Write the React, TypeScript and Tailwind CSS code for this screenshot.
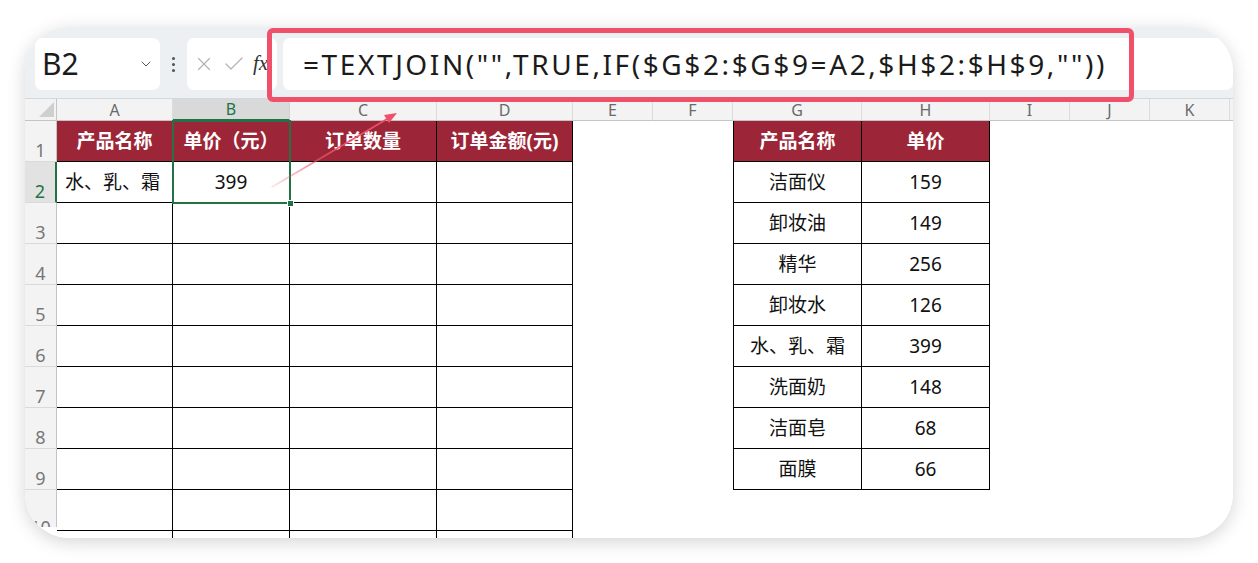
import { Check, ChevronDown, X } from "lucide-react";

// column widths in px: row header, A..K, and a sliver past K
const LETTERS = ["", "A", "B", "C", "D", "E", "F", "G", "H", "I", "J", "K", ""];

const ORDER_HEAD = ["产品名称", "单价（元）", "订单数量", "订单金额(元)"];

const PRICES: [string, string][] = [
  ["洁面仪", "159"],
  ["卸妆油", "149"],
  ["精华", "256"],
  ["卸妆水", "126"],
  ["水、乳、霜", "399"],
  ["洗面奶", "148"],
  ["洁面皂", "68"],
  ["面膜", "66"],
];

const FONT = "font-['Noto_Sans','Noto_Sans_CJK_SC',sans-serif]";

function ColumnHeader() {
  return (
    <>
      {LETTERS.map((l, i) => {
        if (i === 0) {
          return (
            <div key={i} className="relative h-[22px] bg-[#f3f3f3] border-r border-b border-[#c4c4c4]">
              <div className="absolute right-[2px] bottom-[3px] w-0 h-0 border-l-[15px] border-l-transparent border-b-[15px] border-b-[#cfcfcf]" />
            </div>
          );
        }
        const active = l === "B";
        return (
          <div
            key={i}
            className={
              active
                ? "h-[22px] flex items-center justify-center bg-[#d9d9d9] border-r border-[#d0d0d0] border-b-2 border-b-[#217346] text-[16px] text-[#217346]"
                : "h-[22px] flex items-center justify-center bg-[#f3f3f3] border-r border-[#dcdcdc] border-b border-b-[#c4c4c4] text-[16px] text-[#6a6a6a]"
            }
          >
            {l}
          </div>
        );
      })}
    </>
  );
}

function RowHeader({ n }: { n: number }) {
  if (n === 11) return <div className="h-[41px]" />;
  if (n === 10) {
    return (
      <div className="h-[41px]">
        <div className="h-[37px] overflow-hidden bg-[#f3f3f3] border-r border-[#c4c4c4] flex items-end justify-center">
          <span className="text-[18px] leading-[20px] text-[#777] translate-y-[10px]">10</span>
        </div>
      </div>
    );
  }
  const active = n === 2;
  return (
    <div
      className={
        active
          ? "h-[41px] flex items-end justify-center pb-[1px] bg-[#e2e2e2] border-r-2 border-r-[#217346] border-b border-b-[#dadada] text-[18px] leading-[20px] text-[#217346]"
          : "h-[41px] flex items-end justify-center pb-[1px] bg-[#f3f3f3] border-r border-r-[#c4c4c4] border-b border-b-[#dadada] text-[18px] leading-[20px] text-[#777]"
      }
    >
      {n}
    </div>
  );
}

function Cell({ r, c }: { r: number; c: number }) {
  const inOrder = c >= 1 && c <= 4;
  const inPrice = (c === 7 || c === 8) && r <= 9;

  if (inOrder) {
    if (r === 1) {
      return (
        <div className="h-[41px] flex items-center justify-center bg-[#9c2637] border-r border-b border-black text-[19px] font-bold text-white">
          {ORDER_HEAD[c - 1]}
        </div>
      );
    }
    let text = "";
    let align = "justify-center";
    if (r === 2 && c === 1) {
      text = "水、乳、霜";
      align = "justify-start pl-[8px]";
    }
    if (r === 2 && c === 2) text = "399";
    return (
      <div className={`h-[41px] flex items-center ${align} bg-white border-r border-b border-black text-[19px] text-[#111]`}>
        {text}
      </div>
    );
  }

  if (inPrice) {
    const side = c === 7 ? "border-l border-r" : "border-r";
    if (r === 1) {
      return (
        <div className={`h-[41px] flex items-center justify-center bg-[#9c2637] ${side} border-b border-black text-[19px] font-bold text-white`}>
          {c === 7 ? "产品名称" : "单价"}
        </div>
      );
    }
    const row = PRICES[r - 2];
    return (
      <div className={`h-[41px] flex items-center justify-center bg-white ${side} border-b border-black text-[19px] text-[#111]`}>
        {c === 7 ? row[0] : row[1]}
      </div>
    );
  }

  return <div className="h-[41px] bg-white" />;
}

function FormulaBar() {
  return (
    <div className="h-[72px] flex items-start gap-0 pl-[10px] pt-[11px] bg-[#ecf0f2] border-b border-[#d3d8db]">
      {/* name box */}
      <div className="w-[125px] h-[52px] flex items-center justify-between pl-[7px] pr-[6px] bg-white rounded-[7px]">
        <span className="text-[30px] leading-none text-[#1b1b1b]">B2</span>
        <ChevronDown size={16} strokeWidth={1.5} className="text-[#555]" />
      </div>
      {/* drag handle */}
      <div className="w-[27px] h-[52px] flex flex-col items-center justify-center gap-[3px]">
        <span className="w-[3px] h-[3px] rounded-full bg-[#555]" />
        <span className="w-[3px] h-[3px] rounded-full bg-[#555]" />
        <span className="w-[3px] h-[3px] rounded-full bg-[#555]" />
      </div>
      {/* cancel / enter / fx */}
      <div className="w-[90px] h-[52px] flex items-center gap-[7px] pl-[6px] bg-white rounded-[7px]">
        <X size={22} strokeWidth={1.3} className="text-[#b3b3b3]" />
        <Check size={24} strokeWidth={1.3} className="text-[#b3b3b3]" />
        <span className="font-['Liberation_Serif',serif] italic text-[21px] text-[#333]">fx</span>
      </div>
      {/* formula input */}
      <div className="ml-[6px] flex-1 h-[52px] flex items-center pl-[20px] bg-white rounded-[7px]">
        <span className="text-[28px] leading-none tracking-[2.6px] text-[#1b1b1b] whitespace-nowrap">
          =TEXTJOIN("",TRUE,IF($G$2:$G$9=A2,$H$2:$H$9,""))
        </span>
      </div>
    </div>
  );
}

export default function App() {
  const rows = Array.from({ length: 11 }, (_, i) => i + 1);
  return (
    <div className={`w-[1258px] h-[563px] bg-white pl-[25px] pt-[27px] ${FONT}`}>
      <div className="relative w-[1208px] h-[511px] rounded-[44px] overflow-hidden bg-white shadow-[0_4px_18px_rgba(0,0,0,0.17)]">
        <FormulaBar />
        <div className="grid grid-cols-[32px_116px_117px_147px_136px_80px_80px_129px_128px_80px_80px_80px_40px]">
          <ColumnHeader />
          {rows.map((r) => (
            <div key={r} className="contents">
              <RowHeader n={r} />
              {LETTERS.slice(1).map((_, ci) => (
                <Cell key={ci} r={r} c={ci + 1} />
              ))}
            </div>
          ))}
        </div>

        {/* active selection outline on column B */}
        <div className="absolute left-[147px] top-[93px] w-[119px] h-[84px] border-2 border-[#217346]" />
        <div className="absolute left-[262px] top-[173px] w-[7px] h-[7px] bg-[#217346] border border-white" />

        {/* callout box around the formula */}
        <div className="absolute left-[242px] top-[1px] w-[867px] h-[74px] border-[5px] border-[#f0506a] rounded-[6px]" />

        {/* arrow from the cell to the formula */}
        <svg className="absolute inset-0 pointer-events-none" width="1208" height="511">
          <defs>
            <linearGradient id="fade" x1="247" y1="160" x2="372" y2="86" gradientUnits="userSpaceOnUse">
              <stop offset="0" stopColor="#f0506a" stopOpacity="0.15" />
              <stop offset="0.5" stopColor="#f0506a" stopOpacity="0.9" />
              <stop offset="1" stopColor="#f0506a" />
            </linearGradient>
          </defs>
          <line x1="247" y1="160" x2="362" y2="92" stroke="url(#fade)" strokeWidth="1.6" strokeLinecap="round" />
          <polygon points="372,86 364,96 359,88" fill="#f0506a" />
        </svg>
      </div>
    </div>
  );
}
